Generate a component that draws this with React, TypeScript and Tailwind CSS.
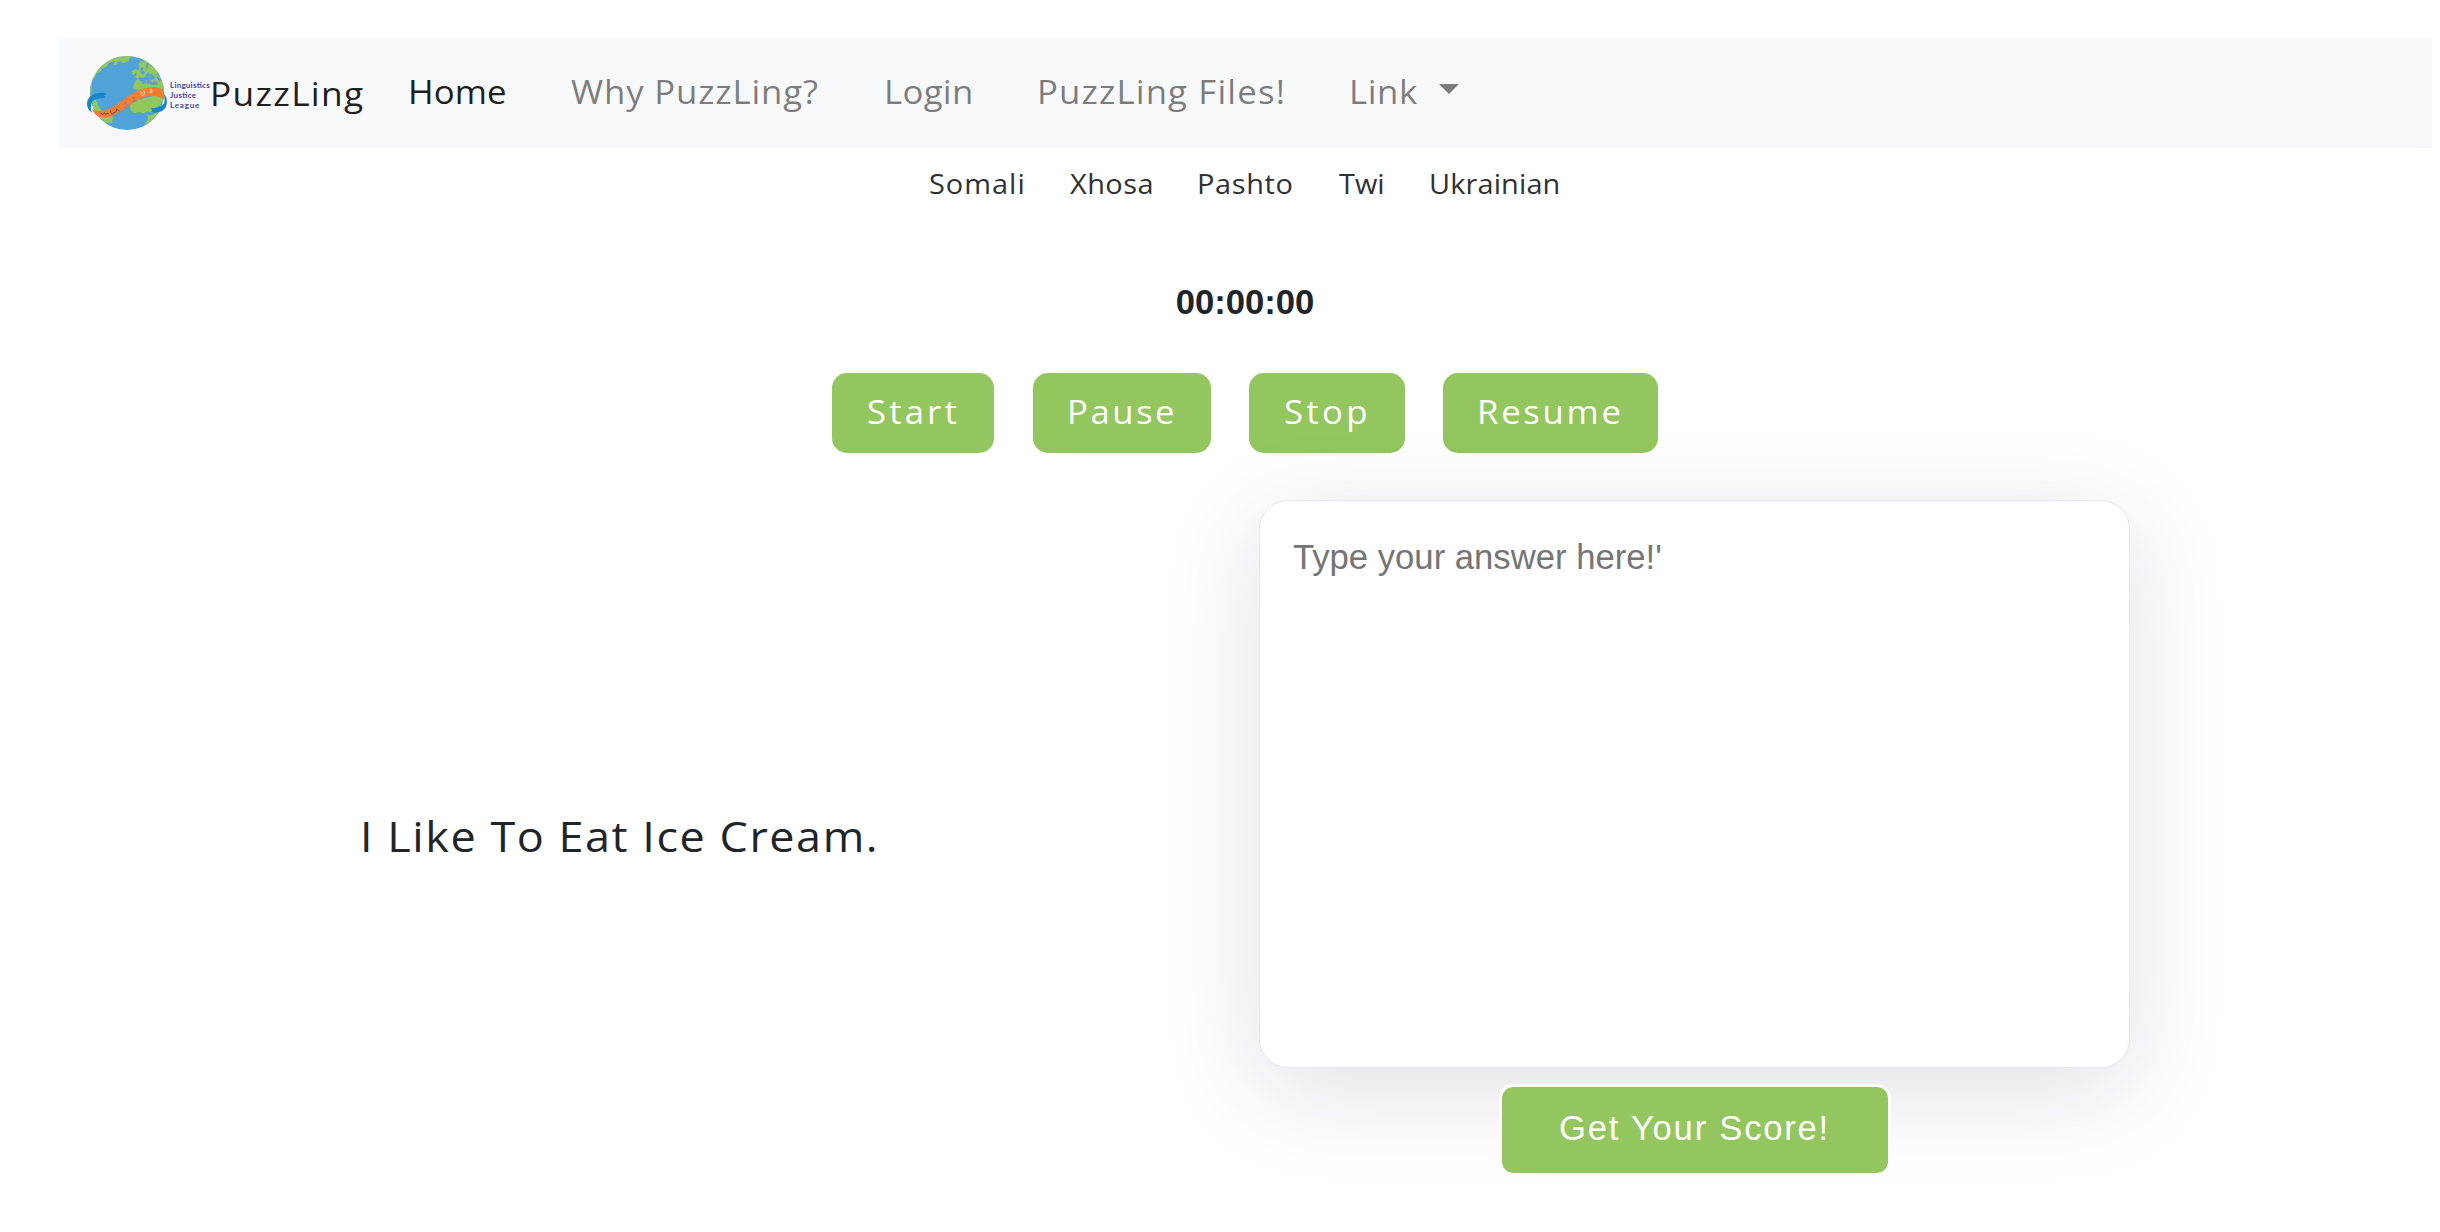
const navItems = [
  { label: 'Home', cls: 'w-[163px] tracking-[0.08px] text-black/90' },
  { label: 'Why PuzzLing?', cls: 'w-[313px] tracking-[0.79px] text-black/50' },
  { label: 'Login', cls: 'w-[153px] tracking-[0.28px] text-black/50' },
  { label: 'PuzzLing Files!', cls: 'w-[312.5px] tracking-[1.07px] text-black/50' },
  { label: 'Link', cls: 'w-[89.5px] tracking-[0.55px] text-black/50' },
];

const languages = [
  { label: 'Somali', cls: 'w-[141px] tracking-[0.95px]' },
  { label: 'Xhosa', cls: 'w-[127px] tracking-[0.45px]' },
  { label: 'Pashto', cls: 'w-[141.5px] tracking-[0.6px]' },
  { label: 'Twi', cls: 'w-[90.5px] tracking-[0px]' },
  { label: 'Ukrainian', cls: 'w-[140px] tracking-[0.13px]' },
];

const controls = [
  { label: 'Start', cls: 'w-[162px] mr-[39px] pl-[35px] tracking-[2.9px]' },
  { label: 'Pause', cls: 'w-[178px] mr-[38px] pl-[33.5px] tracking-[2.3px]' },
  { label: 'Stop', cls: 'w-[156px] mr-[38px] pl-[35px] tracking-[3.05px]' },
  { label: 'Resume', cls: 'w-[215px] pl-[34px] tracking-[2.5px]' },
];

/** Slightly extended setting of the interface typeface. */
function Wide({ children }: { children: string }) {
  return <span className="inline-block origin-left scale-x-[1.07]">{children}</span>;
}

function Logo() {
  return (
    <svg viewBox="0 0 390 240" className="mb-[4px] h-[80px] w-[130px] shrink-0" aria-hidden="true">
      <defs>
        <clipPath id="globe">
          <circle cx="129" cy="123" r="111" />
        </clipPath>
      </defs>
      <g clipPath="url(#globe)">
        <rect width="270" height="240" fill="#50a2d7" />
        <g fill="#92c75d">
          <path d="M10 110V10H150L138 18L132 30L120 24L116 30L104 26L98 38L88 40L92 28L76 32L66 46L54 48L50 60L38 64L32 78L24 84L22 126Z" />
          <path d="M110 14L132 12L136 22L124 32L116 34L112 26L100 30Z" />
          <path d="M164 34L172 26L184 30L198 14L260 20V120L236 112L222 108L206 106L190 110L172 114L150 112L146 104L152 94L156 84L164 82L170 88L182 92L196 84L210 82L214 74L206 70L196 76L188 72L178 78L168 76L160 80L154 74L158 66L150 60L154 50L162 56L166 46Z" />
          <path d="M138 158L156 146L236 124L246 130L228 160L214 166L202 182L190 178L180 184L166 180L152 184L140 176Z" />
          <path d="M236 180L240 206L208 226L186 230L184 214L192 202L190 190L206 188L220 180Z" />
          <path d="M20 130L32 134L44 162L60 188L88 194L84 214L60 210L30 176Z" />
        </g>
        <g fill="#50a2d7">
          <path d="M170 50L178 44L176 56L184 62L176 68L170 62Z" />
          <path d="M188 34L194 30L192 46L186 50Z" />
          <path d="M184 68L194 60L198 68L206 64L204 72L190 74Z" />
          <path d="M218 66L226 64L224 76L232 84L226 88L220 80Z" />
          <path d="M174 84L190 80L204 88L220 90L222 98L200 98L188 94L174 96Z" />
        </g>
        <g fill="#92c75d">
          <path d="M144 58L152 52L154 66L146 70Z" />
          <path d="M184 84L190 84L188 92Z" />
          <path d="M200 88L206 86L206 94Z" />
        </g>
      </g>
      <path d="M24 172C46 184 76 174 106 152C144 122 176 104 214 106C232 107 246 118 240 144C230 134 212 128 192 132C154 140 124 174 84 192C56 202 34 196 24 172Z" fill="#f47d30" />
      <path d="M68 125C48 118 16 126 10 148C7 164 14 174 23 182C20 162 20 150 32 143C44 138 56 140 64 136L60 130Z" fill="#1787c9" />
      <path d="M240 126C250 134 252 156 244 168C234 182 216 184 202 180L204 172L200 168C218 170 232 166 240 154C243 146 242 136 240 126Z" fill="#1787c9" />
      <g fill="none" stroke="#4c4c86" strokeWidth="3">
        <path d="M50 182C52 190 60 188 61 182C63 188 68 187 69 183L76 186" />
        <path d="M80 176C78 188 90 190 90 180C94 184 98 178 98 171L106 177" />
      </g>
      <g fill="none" stroke="#8e7789" strokeWidth="2.5">
        <path d="M118 156L128 150L126 160L134 160M118 164L130 168" />
        <path d="M142 140L150 136L152 150M144 150L158 144" />
      </g>
      <g fill="none" stroke="#f3d3bd" strokeWidth="2.5">
        <path d="M169 118L174 132L183 126L179 114M172 124L178 120" />
        <path d="M196 112L204 113L203 122L196 122M198 117H204" />
      </g>
      <g fill="#4747a0" fontFamily="Lato, sans-serif" fontSize="24" fontWeight="700">
        <text x="258" y="107" textLength="119">Linguistics</text>
        <text x="258" y="137" textLength="78">Justice</text>
        <text x="258" y="167" textLength="88">League</text>
      </g>
    </svg>
  );
}

export default function App() {
  return (
    <div className="h-[1232px] w-[2440px] overflow-hidden bg-white pt-[39px] pr-[8px] pl-[58px] font-['Open_Sans',sans-serif] whitespace-nowrap">
      <nav className="flex h-[109px] items-center bg-[#f8f9fb] pl-[26px]">
        <a className="flex items-center text-[33px] leading-[50px] text-black/90">
          <Logo />
          <span className="-ml-[4px] w-[197.5px] pt-[1px] tracking-[1.2px]"><Wide>PuzzLing</Wide></span>
        </a>
        <ul className="flex items-center pb-[3px] text-[32.5px] leading-[50px]">
          {navItems.map((n) => (
            <li key={n.label} className={n.cls}><Wide>{n.label}</Wide></li>
          ))}
          <li className="-mt-[6px] border-x-[10.5px] border-t-[10.5px] border-x-transparent border-t-black/50" />
        </ul>
      </nav>
      <ul className="mt-[16px] flex pl-[871px] text-[27px] leading-[40px] text-[#2f3133]">
        {languages.map((l) => (
          <li key={l.label} className={l.cls}><Wide>{l.label}</Wide></li>
        ))}
      </ul>
      <div className="mt-[77px] text-center font-['Liberation_Sans',sans-serif] text-[34.67px] leading-[42px] font-bold text-[#212529]">
        00:00:00
      </div>
      <div className="mt-[50px] flex pl-[774px]">
        {controls.map((c) => (
          <button
            key={c.label}
            className={`h-[80px] rounded-[15px] bg-[#93c65e] pb-[2px] text-left text-[32.5px] text-white ${c.cls}`}
          >
            <Wide>{c.label}</Wide>
          </button>
        ))}
      </div>
      <main className="mt-[47px] flex">
        <p className="w-[1201px] pt-[306px] pl-[301.5px] text-[42px] leading-[60px] tracking-[1.45px] text-[#212529]">
          <Wide>I Like To Eat Ice Cream.</Wide>
        </p>
        <div className="flex w-[871px] flex-col items-center">
          <textarea
            className="block h-[568px] w-full resize-none rounded-[29px] border border-[#e6e6f5] bg-white px-[33px] py-[35px] font-['Liberation_Sans',sans-serif] text-[34.67px] leading-[42px] shadow-[0_22px_98px_rgba(40,45,75,0.14)] outline-none placeholder:text-[#757575]"
            placeholder="Type your answer here!'"
          />
          <button className="mt-[16px] box-content h-[86px] w-[386px] rounded-[14px] border-[3px] border-white bg-[#93c65e] bg-clip-padding font-['Liberation_Sans',sans-serif] text-[34.67px] tracking-[1.75px] text-white">
            <span className="relative -top-[2px]">Get Your Score!</span>
          </button>
        </div>
      </main>
    </div>
  );
}
